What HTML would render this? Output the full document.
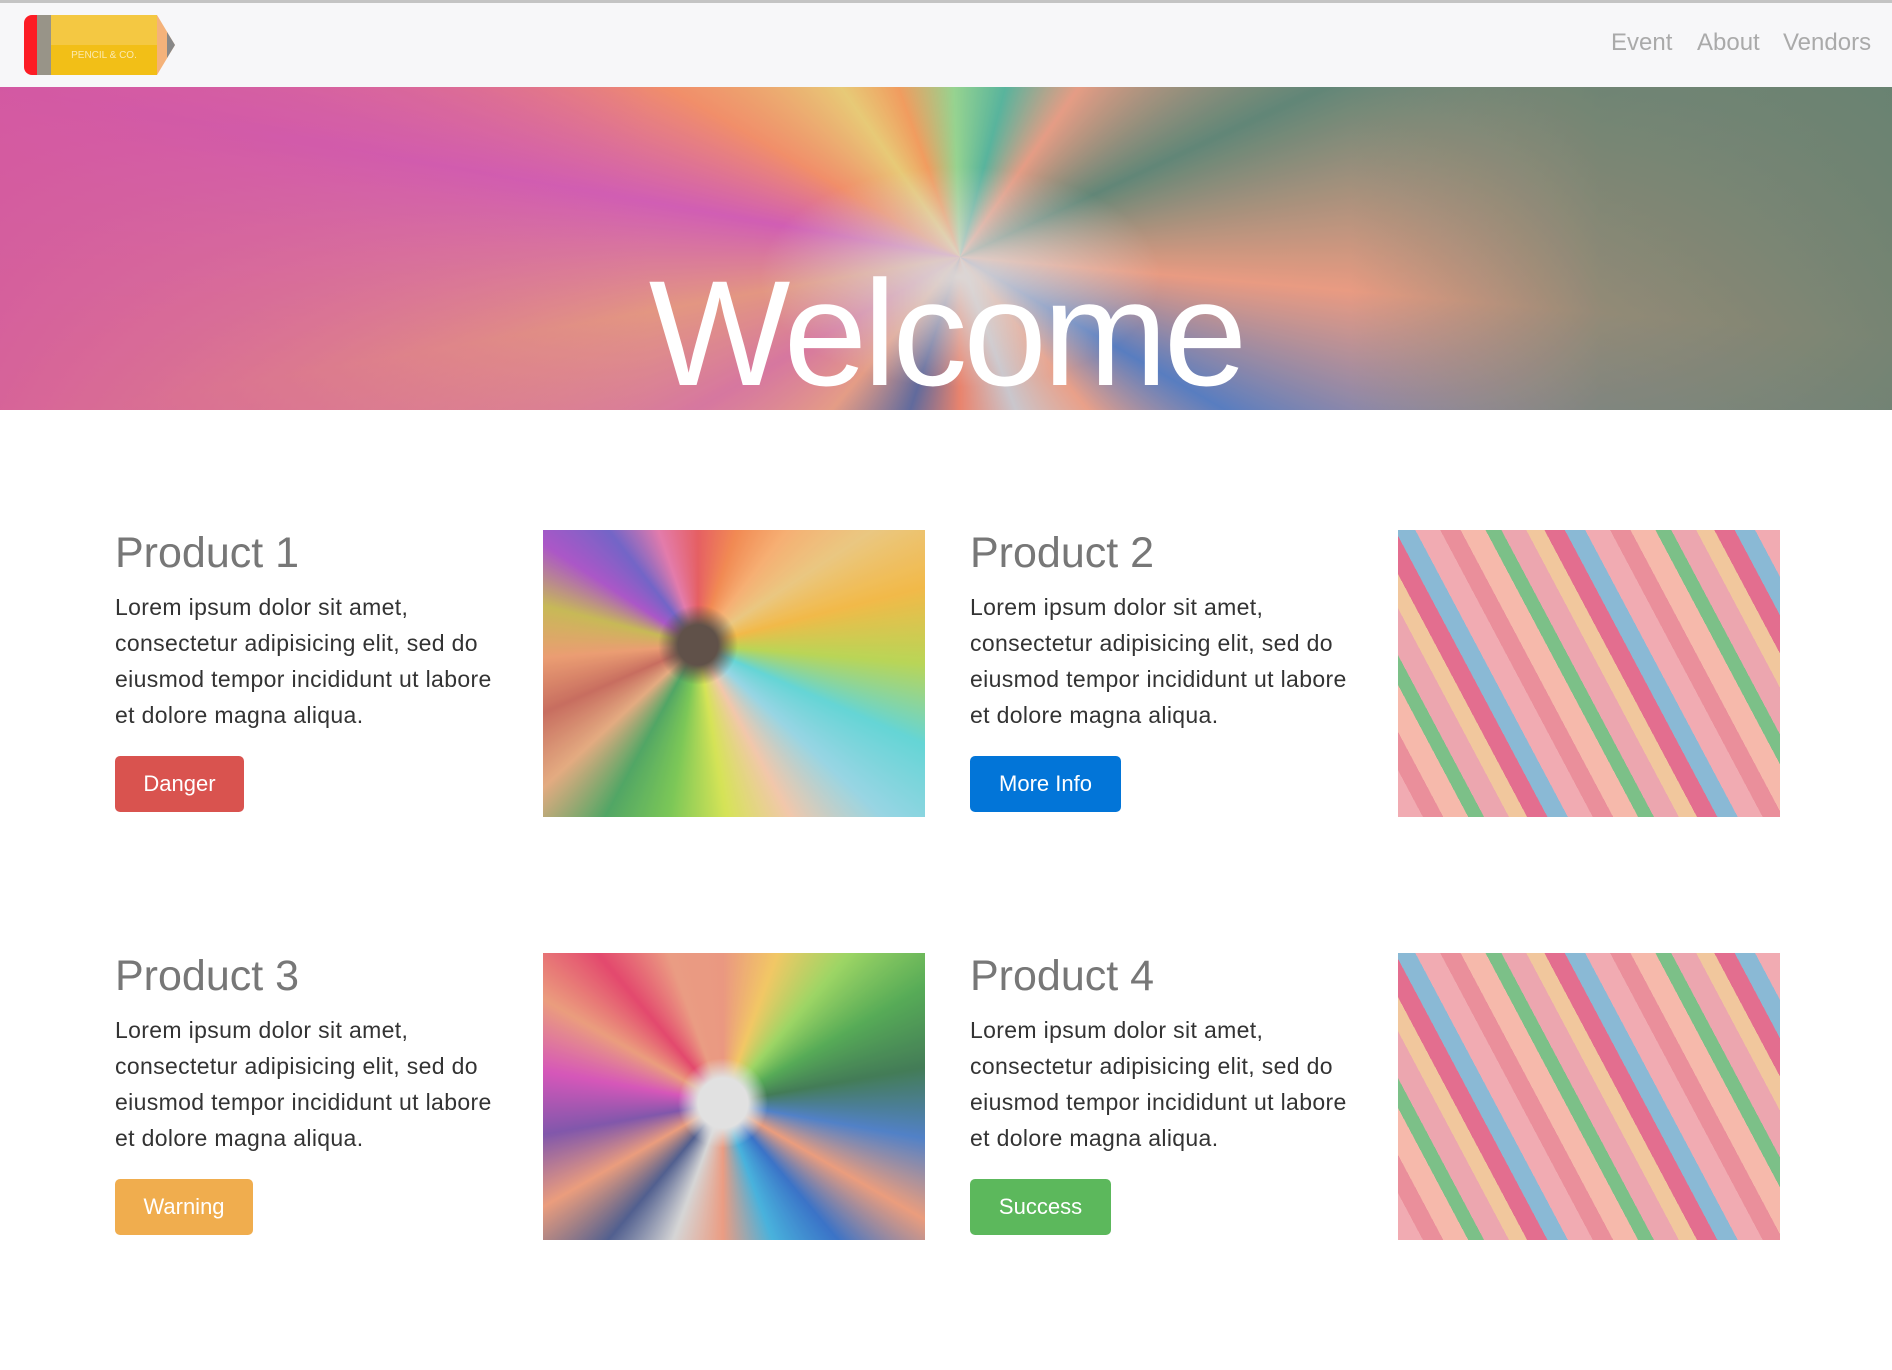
<!DOCTYPE html>
<html><head><meta charset="utf-8"><style>
*{margin:0;padding:0;box-sizing:border-box}
body{width:1892px;height:1370px;background:#fff;font-family:"Liberation Sans",Arial,sans-serif;position:relative;overflow:hidden}
.top{position:absolute;top:0;left:0;width:1892px;height:3px;background:#c4c4c4}
nav{position:absolute;top:3px;left:0;width:1892px;height:84px;background:#f7f7f9}
.nav a{position:absolute;top:26px;font-size:24px;color:#aaa;text-decoration:none}
.hero{position:absolute;top:87px;left:0;width:1892px;height:323px;overflow:hidden;
background:
radial-gradient(ellipse 200px 110px at 960px 190px,#d8d4d2 0%,rgba(216,212,210,.0) 100%),
linear-gradient(90deg,rgba(205,50,140,.8) 0,rgba(205,50,140,.45) 300px,rgba(0,0,0,0) 650px,rgba(0,0,0,0) 1350px,rgba(50,100,80,.6) 1600px,rgba(50,100,80,.8) 1892px),
conic-gradient(from 180deg at 960px 170px,#e86a4e 0deg,#3a4a8a 18deg,#e28a6e 40deg,#d05a8e 60deg,#e08268 80deg,#c93aa8 100deg,#f2784a 120deg,#e6c45a 145deg,#f28a3c 160deg,#7ed07a 178deg,#2fa88a 195deg,#e38a6c 215deg,#3a6e5a 245deg,#e88868 275deg,#2f62b8 300deg,#e88f72 320deg,#c0c0c8 340deg,#e86a4e 360deg);}
.hero::after{content:"";position:absolute;inset:0;background:rgba(235,225,225,.22)}
.hero h1{position:absolute;left:0;width:1892px;text-align:center;top:160px;font-size:150px;font-weight:normal;color:#fff;z-index:2;letter-spacing:-4px}
.p{position:absolute;width:420px}
.p h2{font-size:43px;font-weight:normal;color:#777;line-height:48px;height:60px}
.p p{font-size:23px;letter-spacing:0.35px;line-height:36px;color:#333;white-space:nowrap}
.btn{position:absolute;height:56px;border-radius:5px;color:#fff;font-size:22px;line-height:56px;text-align:center}
.img{position:absolute;width:382px;height:287px}
.fan1{background:radial-gradient(circle at 155px 115px,#4a3a30 0,#4a3a30 20px,rgba(0,0,0,0) 40px),conic-gradient(from 0deg at 155px 115px,#e24a4e,#f07a3c,#f5a460,#e8c070,#f0b030,#b0d040,#50d0d0,#8ad0e0,#f0c0a0,#d0e040,#6ac040,#3a9a50,#e0a070,#c05a4a,#e89060,#c0b040,#a040c0,#6050c0,#e06aa0,#e24a4e)}
.fan2{background:radial-gradient(circle at 180px 150px,#ddd 0,#ddd 25px,rgba(0,0,0,0) 45px),conic-gradient(from 0deg at 180px 150px,#e88a70,#f0c050,#90d050,#40a040,#2a6a40,#3a70c0,#e8906c,#2060c0,#30a8d8,#e88f72,#d0d0d0,#3a4a80,#e8906c,#7040a0,#d040b0,#e8906c,#e0305a,#e88f72,#e88a70)}
.diag{background:repeating-linear-gradient(62deg,#f0a0a8 0 22px,#e8808e 22px 40px,#f5b0a0 40px 62px,#6ab878 62px 76px,#ea9aa4 76px 98px,#f0c090 98px 114px,#e05a80 114px 132px,#7ab0d0 132px 150px)}
.img::after{content:"";position:absolute;inset:0;background:rgba(255,255,255,.12)}
</style></head><body>
<div class="top"></div>
<nav>
<svg style="position:absolute;left:24px;top:12px" width="152" height="61" viewBox="0 0 152 61">
<path d="M8 0H13V60H8A8 8 0 0 1 0 52V8A8 8 0 0 1 8 0Z" fill="#fc1c25"/>
<rect x="13" y="0" width="14" height="60" fill="#989488"/>
<rect x="27" y="0" width="106" height="30" fill="#f4c842"/>
<rect x="27" y="30" width="106" height="30" fill="#f2bf17"/>
<path d="M133 0L151 30L133 60Z" fill="#f4b27a"/>
<path d="M143 17L151 30L143 43Z" fill="#888"/>
<text x="80" y="43" font-size="10" fill="#fbe9b0" text-anchor="middle" font-family="Liberation Sans">PENCIL &amp; CO.</text>
</svg>
<div class="nav"><a style="left:1611px">Event</a><a style="left:1697px">About</a><a style="left:1783px">Vendors</a></div>
</nav>
<div class="hero"><h1>Welcome</h1></div>

<div class="p" style="left:115px;top:529px"><h2>Product 1</h2><p>Lorem ipsum dolor sit amet,<br>consectetur adipisicing elit, sed do<br>eiusmod tempor incididunt ut labore<br>et dolore magna aliqua.</p></div>
<div class="btn" style="left:115px;top:756px;width:129px;background:#d9534f">Danger</div>
<div class="img fan1" style="left:543px;top:530px"></div>

<div class="p" style="left:970px;top:529px"><h2>Product 2</h2><p>Lorem ipsum dolor sit amet,<br>consectetur adipisicing elit, sed do<br>eiusmod tempor incididunt ut labore<br>et dolore magna aliqua.</p></div>
<div class="btn" style="left:970px;top:756px;width:151px;background:#0275d8">More Info</div>
<div class="img diag" style="left:1398px;top:530px"></div>

<div class="p" style="left:115px;top:952px"><h2>Product 3</h2><p>Lorem ipsum dolor sit amet,<br>consectetur adipisicing elit, sed do<br>eiusmod tempor incididunt ut labore<br>et dolore magna aliqua.</p></div>
<div class="btn" style="left:115px;top:1179px;width:138px;background:#f0ad4e">Warning</div>
<div class="img fan2" style="left:543px;top:953px"></div>

<div class="p" style="left:970px;top:952px"><h2>Product 4</h2><p>Lorem ipsum dolor sit amet,<br>consectetur adipisicing elit, sed do<br>eiusmod tempor incididunt ut labore<br>et dolore magna aliqua.</p></div>
<div class="btn" style="left:970px;top:1179px;width:141px;background:#5cb85c">Success</div>
<div class="img diag" style="left:1398px;top:953px"></div>
</body></html>
